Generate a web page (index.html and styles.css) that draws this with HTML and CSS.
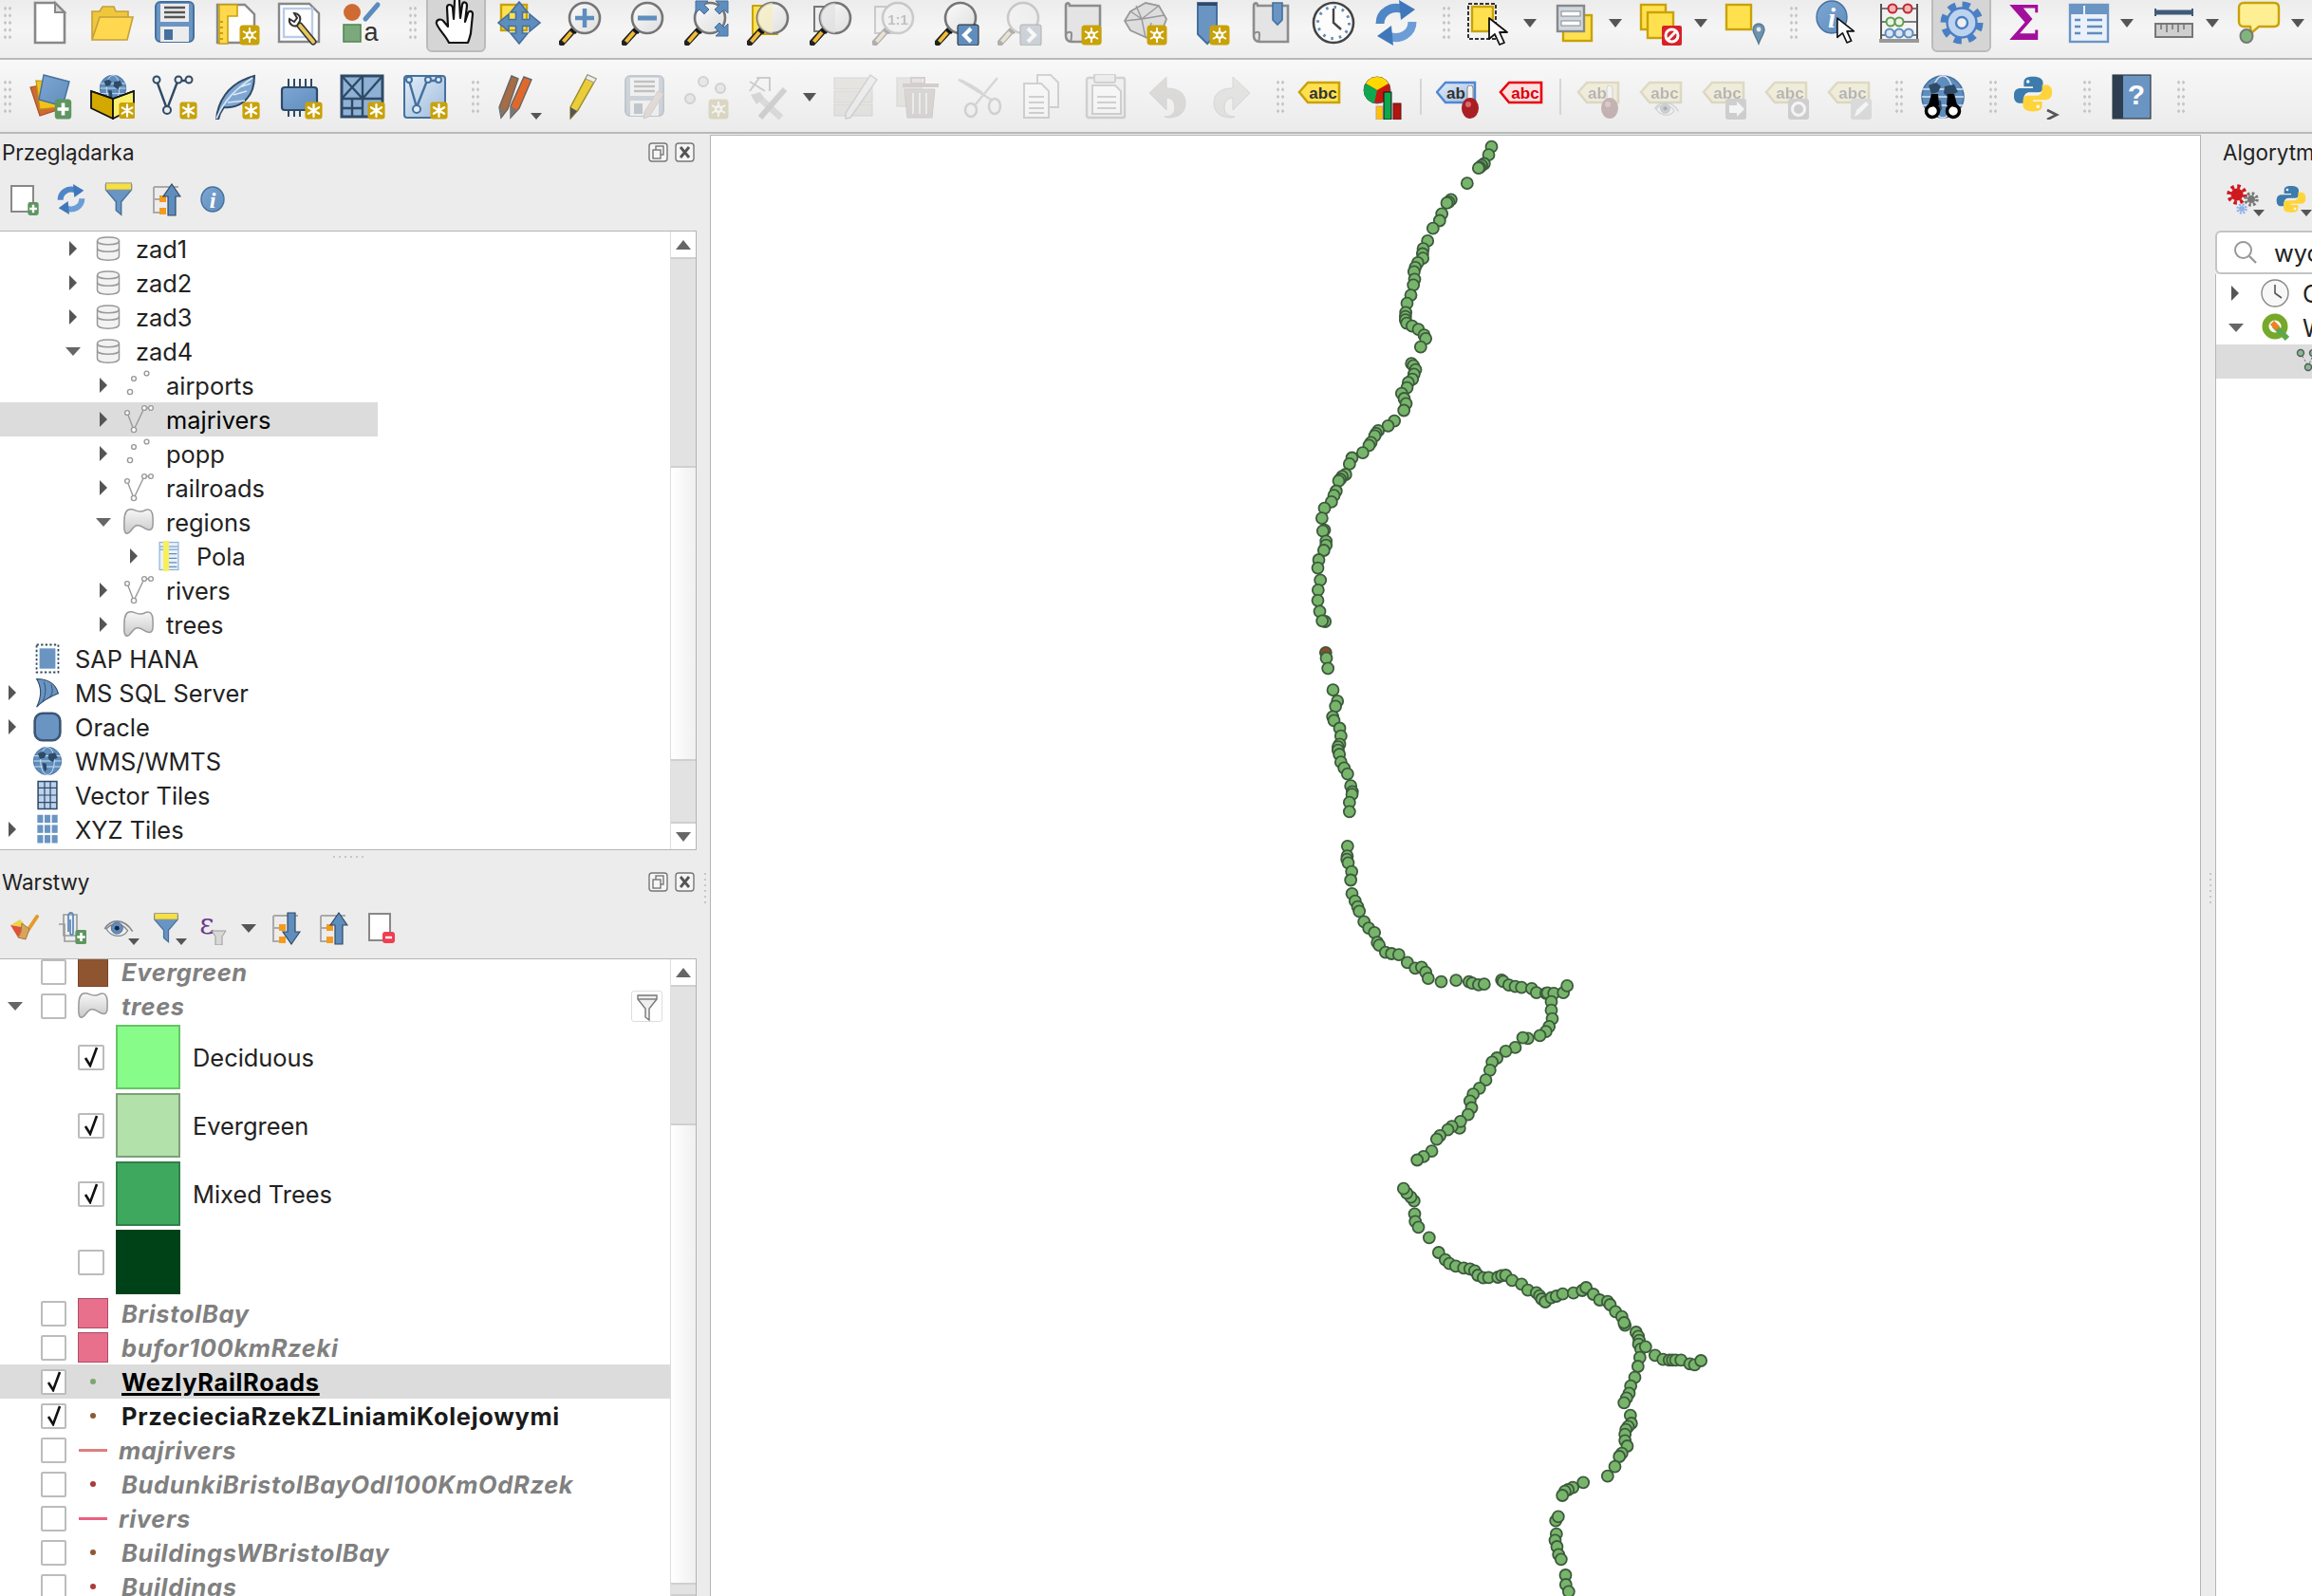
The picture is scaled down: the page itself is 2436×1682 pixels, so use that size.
FILE: index.html
```html
<!DOCTYPE html>
<html lang="pl">
<head>
  <meta charset="UTF-8" />
  <title>QGIS</title>
  <link rel="stylesheet" href="styles.css">
</head>
<body>

<!-- icon set -->
<svg class="defs" aria-hidden="true">
  <defs>
    <linearGradient id="blueFill" x1="0" y1="0" x2="1" y2="1"><stop offset="0" stop-color="#7ea6d2"/><stop offset="1" stop-color="#5f8dbd"/></linearGradient>
    <linearGradient id="paleBlue" x1="0" y1="0" x2="1" y2="1"><stop offset="0" stop-color="#e3edf8"/><stop offset="1" stop-color="#9dbbdc"/></linearGradient>
    <linearGradient id="glass" x1="0" y1="0" x2="1" y2="1"><stop offset="0" stop-color="#fbfbfb"/><stop offset="1" stop-color="#dedede"/></linearGradient>
    <linearGradient id="polyFill" x1="0" y1="0" x2="0" y2="1"><stop offset="0" stop-color="#f7f7f7"/><stop offset="1" stop-color="#c9c9c9"/></linearGradient>
  </defs>

  <symbol id="badge" viewBox="0 0 22 22"><rect x=".5" y=".5" width="21" height="21" rx="3.5" fill="#c9a208"/><path d="M11 3.5v15M4.5 7.2l13 7.6M4.5 14.8l13-7.6" stroke="#fff" stroke-width="2.6" stroke-linecap="round"/></symbol>
  <symbol id="badge2" viewBox="0 0 22 22"><rect x=".5" y=".5" width="21" height="21" rx="3.5" fill="#c9a208"/><path d="M11 3v16M4 7l14 8M4 15l14-8" stroke="#fff" stroke-width="1.8"/><circle cx="11" cy="11" r="4" fill="#fff"/><circle cx="11" cy="11" r="1.8" fill="#c9a208"/></symbol>
  <symbol id="plus" viewBox="0 0 20 24"><rect x=".5" y=".5" width="19" height="23" rx="4" fill="#5f9560"/><path d="M10 5v14M3.5 12h13" stroke="#fff" stroke-width="4"/></symbol>

  <symbol id="mag" viewBox="0 0 48 48"><path d="M14 33L3 45" stroke="#222" stroke-width="7" stroke-linecap="round"/><path d="M13 34L4.500 44" stroke="#f0bd36" stroke-width="4"/><path d="M17 26l5 5-5 5-5-5z" fill="#111"/><circle cx="27" cy="19" r="16" fill="url(#glass)" stroke="#757575" stroke-width="2.600"/></symbol>
  <symbol id="cursor" viewBox="0 0 26 30"><path d="M2 1v22l6-5 5 11 5-2-5-11h8z" fill="#fff" stroke="#111" stroke-width="1.800" stroke-linejoin="round"/></symbol>
  <symbol id="scroll" viewBox="0 0 48 48"><path d="M10 6h32v38H12c-4 0-6-3-6-6V6c0-3 4-4 4 0z" fill="#e4e4e4" stroke="#8d8d8d" stroke-width="2.600"/><path d="M6 36c2-3 6-3 6 0s-1 8 0 8" fill="none" stroke="#8d8d8d" stroke-width="2"/></symbol>
  <symbol id="floppy" viewBox="0 0 48 48"><rect x="4" y="2" width="40" height="42" rx="5" fill="#6a95c3" stroke="#44709e" stroke-width="2"/><rect x="9" y="4" width="30" height="19" fill="#ececec"/><path d="M13 8h22M13 13h22M13 18h22" stroke="#555" stroke-width="2.400"/><rect x="9" y="28" width="30" height="16" fill="#ececec"/><rect x="13" y="31" width="9" height="11" fill="#44709e"/></symbol>
  <symbol id="arrows" viewBox="0 0 48 48"><path d="M24 2l9 11h-5.500v7.500H35V15l11 9-11 9v-5.500h-7.500V35H33l-9 11-9-11h5.500v-7.500H13V33L2 24l11-9v5.500h7.500V13H15z" fill="#5f8dbd" stroke="#44709e" stroke-width="1.600"/></symbol>
  <symbol id="refresh" viewBox="0 0 48 48"><path d="M7 25C7 13 19 5 32 10" fill="none" stroke="#4f86c6" stroke-width="9"/><path d="M27 0l17 10-15 11z" fill="#3f78ba"/><path d="M41 23c0 12-12 20-25 15" fill="none" stroke="#6c9dd6" stroke-width="9"/><path d="M21 48L4 38l15-11z" fill="#3f78ba"/></symbol>
  <symbol id="gear" viewBox="0 0 48 48"><circle cx="24" cy="24" r="19" fill="none" stroke="currentColor" stroke-width="7" stroke-dasharray="8 6.920"/><circle cx="24" cy="24" r="15.500" fill="#bcd2ee" stroke="currentColor" stroke-width="2.400"/><circle cx="24" cy="24" r="6" fill="#efefef" stroke="currentColor" stroke-width="2.400"/></symbol>
  <symbol id="python" viewBox="0 0 48 48"><path d="M24 3c-9 0-11 3-11 7v5h11v2H9c-5 0-8 3-8 9s3 9 7 9h5v-6c0-4 3-7 7-7h10c4 0 6-2 6-6v-6c0-4-4-7-12-7z" fill="#3d7bad"/><circle cx="18" cy="9" r="2" fill="#fff"/><path d="M24 45c9 0 11-3 11-7v-5H24v-2h15c5 0 8-3 8-9s-3-9-7-9h-5v6c0 4-3 7-7 7H18c-4 0-6 2-6 6v6c0 4 4 7 12 7z" fill="#ffd43b"/><circle cx="30" cy="39" r="2" fill="#fff"/></symbol>
  <symbol id="funnel" viewBox="0 0 32 40"><path d="M1 3h30v6L19 23v15l-6-5V23L1 9z" fill="#6a95c3" stroke="#44709e" stroke-width="1.600"/><rect x="1" y="1" width="30" height="8" fill="#f5e046" stroke="#8c8c8c"/></symbol>
  <symbol id="line" viewBox="3 0 32 32"><path d="M7 9l7 18 11-23 7 0" fill="none" stroke="#999" stroke-width="1.400"/><circle cx="7" cy="9" r="2.400" fill="#fff" stroke="#999" stroke-width="1.400"/><circle cx="14" cy="27" r="2.600" fill="#fff" stroke="#999" stroke-width="1.400"/><circle cx="25" cy="4" r="2.400" fill="#fff" stroke="#999" stroke-width="1.400"/><circle cx="32" cy="4" r="2.400" fill="#fff" stroke="#999" stroke-width="1.400"/></symbol>
  <symbol id="points" viewBox="3 0 32 32"><circle cx="10" cy="23" r="2.600" fill="#fff" stroke="#999" stroke-width="1.400"/><circle cx="14" cy="9" r="2.400" fill="#fff" stroke="#999" stroke-width="1.400"/><circle cx="27.500" cy="3.500" r="2.400" fill="#fff" stroke="#999" stroke-width="1.400"/></symbol>
  <symbol id="poly" viewBox="0 0 34 34"><path d="M8 3c6 0 10 5 16 1 6-3 9 2 9 8 0 7 1 14-4 14-6 0-8-6-14-5-5 1-7 9-11 9-4 0-3-9-3-14 0-7 1-13 7-13z" fill="url(#polyFill)" stroke="#999" stroke-width="1.600"/></symbol>
  <symbol id="db" viewBox="-3 -3 32 32"><path d="M1.500 5c0-5.500 23-5.500 23 0v16c0 5.500-23 5.500-23 0z" fill="#f2f2f2" stroke="#999" stroke-width="1.500"/><path d="M1.500 5c0 5 23 5 23 0M1.500 12.500c0 5 23 5 23 0" fill="none" stroke="#999" stroke-width="1.500"/></symbol>
  <symbol id="globe" viewBox="0 0 48 48"><circle cx="24" cy="24" r="22" fill="#5f8dbd" stroke="#44709e" stroke-width="1.500"/><ellipse cx="24" cy="24" rx="11" ry="22" fill="none" stroke="#d7e5f3" stroke-width="1.400"/><path d="M3 16h42M2 24h44M3 33h42" stroke="#d7e5f3" stroke-width="1.400"/><path d="M9 12l8-3 5 4-3 6-7 2zM26 13l10-2 4 8-5 2-2 5-4-2-4-4zM16 27l6 1 1 9-3 4-3-7z" fill="#2f4a66"/></symbol>
  <symbol id="eye" viewBox="0 0 36 30"><path d="M1 15C8 3 24 1 35 18" fill="none" stroke="#888" stroke-width="2"/><path d="M3 15c6-7 18-9 26 2-6 10-20 8-26-2z" fill="#eee" stroke="#888" stroke-width="1.500"/><circle cx="16" cy="14" r="7" fill="#5f8dbd" stroke="#44709e"/><circle cx="16" cy="14" r="2.800" fill="#223"/></symbol>

  <!-- tags for the label tools -->
  <symbol id="tag" viewBox="0 0 48 48"><path d="M3 19l9-10h33v21H12z" fill="#ffe14f" stroke="#c9a208" stroke-width="2.600"/></symbol>
  <symbol id="redball" viewBox="0 0 20 36"><rect x="7" y="0" width="6" height="18" rx="3" fill="#f3f3f3" stroke="#888"/><ellipse cx="10" cy="24" rx="9" ry="11" fill="#a81f24"/><ellipse cx="8" cy="20" rx="3" ry="3" fill="#d96b6e"/></symbol>

  <!-- first toolbar -->
  <symbol id="i-new" viewBox="0 0 48 48"><path d="M9 3h21l10 10v32H9z" fill="#fff" stroke="#888" stroke-width="2.600"/><path d="M30 3v10h10z" fill="#d8d8d8" stroke="#888" stroke-width="2"/></symbol>
  <symbol id="i-open" viewBox="0 0 48 48"><path d="M3 41V12h8l3-5h12l2 5h13v8" fill="#f0c63c" stroke="#c4a03a" stroke-width="1.600"/><path d="M11 18h35l-6 24H3z" fill="#ffd84f" stroke="#c4a03a" stroke-width="1.600"/></symbol>
  <symbol id="i-layout" viewBox="0 0 48 48"><path d="M3 5h29l10 10v30H3z" fill="#fff" stroke="#888" stroke-width="2.400"/><path d="M5 5h19v12H14v29H5z" fill="#ffd84f" stroke="#c9a208" stroke-width="1.600"/><path d="M5 23h4M5 29h4M5 35h4M5 41h4" stroke="#c9a208" stroke-width="2"/><use href="#badge2" x="26" y="26" width="22" height="22"/></symbol>
  <symbol id="i-layouts" viewBox="0 0 48 48"><path d="M2 4h32l10 10v30H2z" fill="#fff" stroke="#888" stroke-width="2.400"/><rect x="7" y="9" width="30" height="30" fill="#fff" stroke="#b8cdea" stroke-width="2.400"/><path d="M24 27l14 17" stroke="#333" stroke-width="7" stroke-linecap="round"/><path d="M24 27l14 17" stroke="#e6c75a" stroke-width="4" stroke-linecap="round"/><path d="M13 20a6 6 0 0 0 8 7l3-5a6 6 0 0 0-6-8l3 5-3 4z" fill="#fff" stroke="#333" stroke-width="2"/></symbol>
  <symbol id="i-style" viewBox="0 0 48 48"><circle cx="13" cy="13" r="9" fill="#cf6a33"/><path d="M40 5L27 20" stroke="#5b8cbf" stroke-width="5" stroke-linecap="round"/><rect x="4" y="26" width="18" height="18" fill="#7ba97c" stroke="#55875a" stroke-width="1.600"/></symbol>
  <symbol id="i-hand" viewBox="0 0 48 48"><path d="M16 45C13 38 5 31 3 25c-1-4 4-6 7-3l5 6-1-20c0-4 5-4 6 0l1 12 1-19c0-4 5-4 5 0l1 18 2-14c1-4 5-3 5 1l-2 17 3-9c1-3 5-3 5 1l-2 20c-1 5-2 7-3 10z" fill="#fff" stroke="#111" stroke-width="2.200" stroke-linejoin="round"/></symbol>
  <symbol id="i-move" viewBox="0 0 48 48"><rect x="5" y="5" width="27" height="27" fill="#ffe14f" stroke="#c9a208" stroke-width="2.400"/><use href="#arrows"/></symbol>
  <symbol id="i-zin" viewBox="0 0 48 48"><use href="#mag"/><path d="M27 9v20M17 19h20" stroke="#5f8dbd" stroke-width="4.500"/></symbol>
  <symbol id="i-zout" viewBox="0 0 48 48"><use href="#mag"/><path d="M17 19h20" stroke="#5f8dbd" stroke-width="5"/></symbol>
  <symbol id="i-zfull" viewBox="0 0 48 48"><use href="#mag"/><path d="M12 1h13l-4 4 5 5-5 5-5-5-4 4zM46 1v13l-4-4-5 5-5-5 5-5-4-4zM46 38V25l-4 4-5-5-5 5 5 5-4 4z" fill="#5f8dbd" stroke="#44709e"/></symbol>
  <symbol id="i-zlayer" viewBox="0 0 48 48"><rect x="6" y="6" width="26" height="30" fill="#ffe14f" stroke="#c9a208" stroke-width="2"/><use href="#mag"/><path d="M27 3a16 16 0 0 0 0 32V3z" fill="#f5ecbe" opacity=".7"/></symbol>
  <symbol id="i-zsel" viewBox="0 0 48 48"><rect x="5" y="7" width="25" height="26" fill="#eee" stroke="#777" stroke-width="2"/><use href="#mag"/><path d="M27 3a16 16 0 0 0 0 32V3z" fill="#ddd" opacity=".6"/></symbol>
  <symbol id="i-z11" viewBox="0 0 48 48"><rect x="3" y="7" width="26" height="28" fill="#eee" stroke="#777" stroke-width="2"/><use href="#mag"/></symbol>
  <symbol id="i-zlast" viewBox="0 0 48 48"><use href="#mag"/><rect x="24" y="26" width="22" height="22" rx="2" fill="#5f8dbd" stroke="#222"/><path d="M38 30l-7 7 7 7" fill="none" stroke="#fff" stroke-width="4"/></symbol>
  <symbol id="i-znext" viewBox="0 0 48 48"><use href="#mag"/><rect x="24" y="26" width="22" height="22" rx="2" fill="#5f8dbd" stroke="#222"/><path d="M32 30l7 7-7 7" fill="none" stroke="#fff" stroke-width="4"/></symbol>
  <symbol id="i-map" viewBox="0 0 48 48"><use href="#scroll"/><use href="#badge2" x="22" y="26" width="22" height="22"/></symbol>
  <symbol id="i-map3d" viewBox="0 0 48 48"><path d="M8 12L24 3l14 3 8 14-6 16-14 4-18-8-6-10z" fill="#ddd" stroke="#999" stroke-width="1.800"/><path d="M8 12l12 8 18-14M20 20l4 20M20 20L2 22M20 20l24-4M14 6l6 14M30 24l-4 16" fill="none" stroke="#999" stroke-width="1.400"/><use href="#badge2" x="25" y="26" width="22" height="22"/></symbol>
  <symbol id="i-mark" viewBox="0 0 48 48"><path d="M13 3h20v33l-10 10-10-10z" fill="#6a95c3" stroke="#44709e" stroke-width="2"/><rect x="13" y="3" width="20" height="3" fill="#2f4a66"/><use href="#badge2" x="25" y="26" width="22" height="22"/></symbol>
  <symbol id="i-marks" viewBox="0 0 48 48"><use href="#scroll"/><path d="M26 3h10v18l-5 5-5-5z" fill="#6a95c3" stroke="#44709e" stroke-width="1.600"/></symbol>
  <symbol id="i-clock" viewBox="0 0 48 48"><circle cx="24" cy="24" r="21" fill="#fdfdfd" stroke="#444" stroke-width="2.600"/><circle cx="24" cy="24" r="16.500" fill="none" stroke="#5f8dbd" stroke-width="3" stroke-dasharray="2.600 6.040"/><path d="M24 9v15l8 7" fill="none" stroke="#444" stroke-width="2.400"/></symbol>
  <symbol id="i-select" viewBox="0 0 48 48"><rect x="5" y="7" width="22" height="26" fill="#ffe14f" stroke="#c9a208" stroke-width="2.400"/><rect x="1" y="4" width="29" height="37" fill="none" stroke="#333" stroke-width="2" stroke-dasharray="4 2"/><use href="#cursor" x="21" y="18" width="26" height="30"/></symbol>
  <symbol id="i-sellist" viewBox="0 0 48 48"><rect x="11" y="16" width="30" height="27" fill="#ffe14f" stroke="#c9a208" stroke-width="2.400"/><rect x="5" y="6" width="28" height="27" fill="#cfd8e0" stroke="#888" stroke-width="2.400"/><rect x="9" y="12" width="20" height="5" fill="#fff" stroke="#888"/><rect x="9" y="22" width="20" height="5" fill="#fff" stroke="#888"/></symbol>
  <symbol id="i-desel" viewBox="0 0 48 48"><rect x="3" y="5" width="26" height="26" fill="#ffe14f" stroke="#c9a208" stroke-width="2.400"/><rect x="10" y="13" width="27" height="27" fill="#ffe14f" stroke="#c9a208" stroke-width="2.400"/><rect x="25" y="27" width="21" height="21" rx="2" fill="#d9202a"/><circle cx="35.500" cy="37.500" r="6.500" fill="none" stroke="#fff" stroke-width="3"/><path d="M31 42l9-9" stroke="#fff" stroke-width="3"/></symbol>
  <symbol id="i-selloc" viewBox="0 0 48 48"><rect x="3" y="5" width="26" height="26" fill="#ffe14f" stroke="#c9a208" stroke-width="2.400"/><path d="M37 46c-3-8-6-11-6-15a6 6 0 0 1 12 0c0 4-3 7-6 15z" fill="#6f92ad" stroke="#577a94" stroke-width="1.400"/><circle cx="37" cy="31" r="2.400" fill="#dfe9f2"/></symbol>
  <symbol id="i-abacus" viewBox="0 0 48 48"><path d="M5 4v38M43 4v38" stroke="#555" stroke-width="2"/><path d="M5 9h38M5 23h38M5 37h38" stroke="#555" stroke-width="1.600"/><g fill="#ecf3e4" stroke-width="2"><circle cx="17" cy="9" r="4.500" stroke="#c0272d" fill="#f3b7b7"/><circle cx="33" cy="9" r="4.500" stroke="#c0272d" fill="#f3b7b7"/><circle cx="15" cy="23" r="4.500" stroke="#5f9c4f"/><circle cx="24" cy="23" r="4.500" stroke="#5f9c4f"/><circle cx="14" cy="35" r="4.500" stroke="#5f8dbd" fill="#dbe7f3"/><circle cx="24" cy="35" r="4.500" stroke="#5f8dbd" fill="#dbe7f3"/><circle cx="34" cy="35" r="4.500" stroke="#5f8dbd" fill="#dbe7f3"/></g><rect x="3" y="41" width="42" height="4" fill="#999"/></symbol>
  <symbol id="i-table" viewBox="0 0 48 48"><rect x="6" y="5" width="40" height="39" fill="#eaf1fa" stroke="#6a95c3" stroke-width="2.400"/><rect x="7" y="6" width="38" height="9" fill="#6a95c3"/><path d="M21 6v9" stroke="#eaf1fa" stroke-width="2"/><path d="M11 21h6M24 21h16M11 28h6M24 28h16M11 35h6M24 35h16" stroke="#5f8dbd" stroke-width="2.600"/></symbol>
  <symbol id="i-measure" viewBox="0 0 48 48"><path d="M6 9v8M45 9v8" stroke="#3f5a7a" stroke-width="2"/><path d="M6 13h39" stroke="#3f5a7a" stroke-width="5"/><rect x="6" y="25" width="39" height="14" fill="#cfcfcf" stroke="#777" stroke-width="2"/><path d="M12 25v6M18 25v9M24 25v6M30 25v9M36 25v6" stroke="#777" stroke-width="1.600"/></symbol>
  <symbol id="i-annot" viewBox="0 0 48 48"><path d="M9 3h32c3 0 5 2 5 5v15c0 3-2 5-5 5H25l-8 7-1-7H9c-3 0-5-2-5-5V8c0-3 2-5 5-5z" fill="#ffef94" stroke="#c9a208" stroke-width="2.400"/><ellipse cx="12" cy="38" rx="6.500" ry="7" fill="#80b67d" stroke="#777" stroke-width="2"/></symbol>

  <!-- second toolbar -->
  <symbol id="i-dsm" viewBox="0 0 48 48"><path d="M4 14l24-5 7 28-21 7z" fill="#cf6a33" stroke="#a94f22" stroke-width="1.200"/><path d="M10 7l22 1 2 27-20 2z" fill="#f2c21a" stroke="#b9950f" stroke-width="1.200"/><path d="M18 1l27 7-7 26-25-7z" fill="url(#blueFill)" stroke="#44709e" stroke-width="1.400"/><use href="#plus" x="29" y="26" width="19" height="22"/></symbol>
  <symbol id="i-gpkg" viewBox="0 0 48 48"><use href="#globe" x="10" y="0" width="30" height="30"/><path d="M2 18l23 8v21L2 36z" fill="#d3a900" stroke="#111" stroke-width="1.800"/><path d="M25 26l22-8v18L25 47z" fill="#f9ef6e" stroke="#111" stroke-width="1.800"/><path d="M2 18L25 26 47 18" fill="none" stroke="#111" stroke-width="1.800"/><use href="#badge" x="31" y="29" width="18" height="19"/></symbol>
  <symbol id="i-vline" viewBox="0 0 48 48"><path d="M5 7l11 30L27 8M27 7h10" fill="none" stroke="#2f4a66" stroke-width="2.400"/><circle cx="5" cy="6" r="3.500" fill="#eee" stroke="#2f4a66" stroke-width="2"/><circle cx="16" cy="38" r="4" fill="#eee" stroke="#2f4a66" stroke-width="2"/><circle cx="28" cy="6" r="3.500" fill="#eee" stroke="#2f4a66" stroke-width="2"/><circle cx="39" cy="6" r="3.500" fill="#eee" stroke="#2f4a66" stroke-width="2"/><use href="#badge" x="29" y="29" width="19" height="19"/></symbol>
  <symbol id="i-feather" viewBox="0 0 48 48"><path d="M2 48C3 32 12 10 42 2c0 8-2 18-8 24-6 7-14 10-24 9-3 4-5 8-6 13z" fill="#7ea6d2" stroke="#2f4a66" stroke-width="2"/><path d="M2 47C10 28 22 16 40 4M14 30l18-2M20 22l14-4M26 14l12-4" fill="none" stroke="#dbe7f3" stroke-width="1.600"/><use href="#badge" x="29" y="29" width="19" height="19"/></symbol>
  <symbol id="i-chip" viewBox="0 0 48 48"><path d="M12 5v9M18 5v9M24 5v9M30 5v9M36 5v9M12 36v9M18 36v9M24 36v9" stroke="#2f4a66" stroke-width="2"/><rect x="5" y="14" width="37" height="24" rx="3" fill="url(#blueFill)" stroke="#2f4a66" stroke-width="2.200"/><use href="#badge" x="29" y="29" width="19" height="19"/></symbol>
  <symbol id="i-mesh" viewBox="0 0 48 48"><rect x="2" y="2" width="43" height="43" fill="#8fb1d6" stroke="#2f4a66" stroke-width="3"/><path d="M2 26h43M24 2v43M2 2l22 24M24 2L2 26M24 26L45 2M2 36h22M13 26v19" stroke="#2f4a66" stroke-width="2.400" fill="none"/><use href="#badge" x="29" y="29" width="19" height="19"/></symbol>
  <symbol id="i-virt" viewBox="0 0 48 48"><rect x="2" y="2" width="43" height="44" rx="3" fill="url(#paleBlue)" stroke="#44709e" stroke-width="2"/><path d="M7 7l8 28 11-28 11 0" fill="none" stroke="#44709e" stroke-width="2.400"/><circle cx="7" cy="6" r="3" fill="#e3edf8" stroke="#44709e" stroke-width="2"/><circle cx="15" cy="37" r="4" fill="#e3edf8" stroke="#44709e" stroke-width="2"/><circle cx="27" cy="6" r="3" fill="#e3edf8" stroke="#44709e" stroke-width="2"/><circle cx="38" cy="6" r="3" fill="#e3edf8" stroke="#44709e" stroke-width="2"/><use href="#badge" x="29" y="29" width="19" height="19"/></symbol>
  <symbol id="i-pencils" viewBox="0 0 48 48"><path d="M16 2l7 3-11 32-7 9-2-11z" fill="#a56c45" stroke="#666" stroke-width="1.400"/><path d="M29 3l8 3-13 30-9 10 0-12z" fill="#e0692a" stroke="#666" stroke-width="1.400"/><path d="M5 46l-2-11 5 2z M15 46v-12l6 3z" fill="#777"/></symbol>
  <symbol id="i-pencil" viewBox="0 0 48 48"><path d="M30 1l9 4-19 33-8 9 0-12z" fill="#e9ce3a" stroke="#9b8a30" stroke-width="1.400"/><path d="M30 1l9 4-2 4-9-4z" fill="#eee" stroke="#999"/><path d="M12 47v-12l7 4z" fill="#555"/></symbol>
  <symbol id="i-saveedits" viewBox="0 0 48 48"><use href="#floppy"/><path d="M38 18l6 3-15 24-6 2 1-7z" fill="#e3a08d" stroke="#888"/></symbol>
  <symbol id="i-ptnew" viewBox="0 0 48 48"><circle cx="20" cy="8" r="5" fill="#ccc" stroke="#888" stroke-width="2"/><circle cx="38" cy="15" r="5" fill="#ccc" stroke="#888" stroke-width="2"/><circle cx="6" cy="26" r="5" fill="#ccc" stroke="#888" stroke-width="2"/><use href="#badge2" x="25" y="26" width="22" height="22"/></symbol>
  <symbol id="i-tools" viewBox="0 0 48 48"><path d="M10 4h14v14M3 8l16 10M13 4L3 18" fill="none" stroke="#777" stroke-width="2"/><path d="M10 22l26 24" stroke="#aaa" stroke-width="7"/><path d="M40 16L14 46" stroke="#888" stroke-width="6"/><path d="M4 22l10-3 4 6-8 7z" fill="#999"/></symbol>
  <symbol id="i-edit" viewBox="0 0 48 48"><rect x="2" y="4" width="40" height="12" fill="#c9c4a8" stroke="#999"/><rect x="2" y="18" width="40" height="12" fill="#c9c4a8" stroke="#999"/><rect x="2" y="32" width="40" height="12" fill="#c9c4a8" stroke="#999"/><path d="M40 1l7 5-28 40-5 1 0-6z" fill="#ddd" stroke="#888" stroke-width="1.400"/></symbol>
  <symbol id="i-trash" viewBox="0 0 48 48"><rect x="2" y="4" width="26" height="30" fill="#c9c4a8" stroke="#999"/><path d="M8 12h38" stroke="#a77" stroke-width="4"/><path d="M17 4h14v6H17z" fill="none" stroke="#a77" stroke-width="2"/><path d="M10 16h32l-3 30H13z" fill="#a98" stroke="#977"/><path d="M19 20v22M26 20v22M33 20v22" stroke="#ddd" stroke-width="2"/></symbol>
  <symbol id="i-scissors" viewBox="0 0 48 48"><path d="M1 6l36 22M1 6c8 2 20 10 25 14" stroke="#999" stroke-width="2.400" fill="none"/><ellipse cx="39" cy="34" rx="6" ry="8" fill="none" stroke="#a88" stroke-width="2.600"/><ellipse cx="14" cy="38" rx="6" ry="7" fill="none" stroke="#a88" stroke-width="2.600"/><path d="M18 33L42 4" stroke="#999" stroke-width="2.400"/></symbol>
  <symbol id="i-copy" viewBox="0 0 48 48"><path d="M18 1h14l8 8v26H18z" fill="#f7f7f7" stroke="#888" stroke-width="2"/><path d="M4 10h18l8 8v28H4z" fill="#fff" stroke="#888" stroke-width="2"/><path d="M9 24h16M9 30h16M9 36h16M9 41h16" stroke="#888" stroke-width="2"/></symbol>
  <symbol id="i-paste" viewBox="0 0 48 48"><rect x="4" y="4" width="40" height="42" rx="2" fill="#e8e8e8" stroke="#888" stroke-width="2.400"/><rect x="12" y="0" width="22" height="9" rx="2" fill="#d8d8d8" stroke="#888" stroke-width="2"/><path d="M10 12h24l6 6v24H10z" fill="#fff" stroke="#888" stroke-width="2"/><path d="M15 24h20M15 30h20M15 36h20" stroke="#888" stroke-width="2"/></symbol>
  <symbol id="i-undo" viewBox="0 0 48 48"><path d="M22 3v12c14 0 20 6 20 16 0 10-8 15-18 15l-4-1c8 0 11-4 11-10s-4-10-9-10v13L4 20z" fill="#b5a69a" stroke="#999"/></symbol>
  <symbol id="i-redo" viewBox="0 0 48 48"><path d="M26 3v12c-14 0-20 6-20 16 0 10 8 15 18 15l4-1c-8 0-11-4-11-10s4-10 9-10v13l18-18z" fill="#bfc5ba" stroke="#999"/></symbol>
  <symbol id="i-diagram" viewBox="0 0 48 48"><circle cx="19" cy="17" r="14" fill="#c9160f" stroke="#555"/><path d="M19 17V3a14 14 0 0 0-12 7z" fill="#ffd800"/><path d="M19 3a14 14 0 0 1 12 7l-12 7z" fill="#ffd800"/><path d="M19 17L7 10a14 14 0 0 0 9 21z" fill="#0fa650"/><rect x="18" y="34" width="7" height="14" fill="#ffc400" stroke="#c99"/><rect x="26" y="19" width="8" height="29" fill="#0fa650" stroke="#111"/><rect x="36" y="31" width="8" height="17" fill="#b1160f" stroke="#611"/></symbol>
  <symbol id="i-abcmove" viewBox="0 0 48 48"><rect x="26" y="26" width="22" height="22" rx="3" fill="#888"/><path d="M30 33h8v-4l8 8-8 8v-4h-8z" fill="#fff"/></symbol>
  <symbol id="i-abcrot" viewBox="0 0 48 48"><rect x="26" y="26" width="22" height="22" rx="3" fill="#888"/><circle cx="37" cy="37" r="6.500" fill="none" stroke="#fff" stroke-width="3"/></symbol>
  <symbol id="i-abcedit" viewBox="0 0 48 48"><rect x="26" y="26" width="22" height="22" rx="3" fill="#aaa"/><path d="M30 45l2-7 10-9 3 3-10 10z" fill="#fff"/></symbol>
  <symbol id="i-locator" viewBox="0 0 48 48"><use href="#globe"/><circle cx="13" cy="39" r="6.500" fill="#fff" stroke="#000" stroke-width="3.500"/><circle cx="35" cy="39" r="6.500" fill="#fff" stroke="#000" stroke-width="3.500"/><path d="M8 36l4-15h7l1 12-6 1zM40 36l-4-15h-7l-1 12 6 1z" fill="#000"/></symbol>
  <symbol id="i-py" viewBox="0 0 48 48"><use href="#python" x="-1" y="0" width="42" height="42"/><path d="M35 38l10 5-10 5" fill="none" stroke="#555" stroke-width="2.600"/></symbol>
  <symbol id="i-help" viewBox="0 0 48 48"><rect x="5" y="1" width="40" height="46" fill="#6a95c3" stroke="#222"/><rect x="5" y="1" width="11" height="46" fill="#2c3e50"/></symbol>

  <!-- panel tools -->
  <symbol id="p-add" viewBox="0 0 32 36"><rect x="3" y="4" width="23" height="27" fill="#fff" stroke="#888" stroke-width="2"/><use href="#plus" x="20" y="20" width="12" height="16"/></symbol>
  <symbol id="p-collapse" viewBox="0 0 32 36"><path d="M3 5h26M3 5v28M3 18h8M3 32h8" stroke="#aaa" stroke-width="2" fill="none"/><rect x="9" y="14" width="7" height="7" fill="#f49b1c"/><rect x="9" y="27" width="7" height="7" fill="#f49b1c"/><path d="M22 2l9 13h-5v20h-8V15h-5z" fill="#5f8dbd" stroke="#2f4a66" stroke-width="1.200"/></symbol>
  <symbol id="p-expand" viewBox="0 0 32 36"><path d="M3 5h26M3 5v28M3 18h8M3 32h8" stroke="#aaa" stroke-width="2" fill="none"/><rect x="9" y="14" width="7" height="7" fill="#f49b1c"/><rect x="9" y="27" width="7" height="7" fill="#f49b1c"/><path d="M22 35l9-13h-5V2h-8v20h-5z" fill="#5f8dbd" stroke="#2f4a66" stroke-width="1.200"/></symbol>
  <symbol id="p-info" viewBox="0 0 32 36"><ellipse cx="15" cy="18" rx="12" ry="13" fill="url(#blueFill)" stroke="#44709e" stroke-width="1.400"/></symbol>
  <symbol id="p-brush" viewBox="0 0 32 36"><path d="M20 21L30 6" stroke="#e49b2c" stroke-width="4" stroke-linecap="round"/><path d="M2 15l10-6 4 4-2 4z" fill="#e9d64a"/><path d="M2 15l12 2 1 1-5 10z" fill="#e2503a"/><path d="M14 13l8 6-4 11-8-2 3-5z" fill="#d9a45a" stroke="#a47838"/></symbol>
  <symbol id="p-group" viewBox="0 0 32 36"><path d="M8 12V4h14v22H8z" fill="#eee" stroke="#999" stroke-width="1.600"/><path d="M3 14h6v18h16" fill="none" stroke="#999" stroke-width="1.600"/><path d="M13 22V5c0-4 5-4 5 0v18c0 3-3 3-3 0V9" fill="none" stroke="#5f8dbd" stroke-width="1.800"/><use href="#plus" x="20" y="19" width="13" height="17"/></symbol>
  <symbol id="p-eye" viewBox="0 0 32 36"><use href="#eye" x="0" y="6" width="32" height="26"/></symbol>
  <symbol id="p-funnel" viewBox="0 0 32 36"><use href="#funnel" x="3" y="0" width="26" height="36"/></symbol>
  <symbol id="p-remove" viewBox="0 0 32 36"><path d="M26 22V3H4v28h17" fill="#fff" stroke="#888" stroke-width="2"/><rect x="18" y="22" width="13" height="12" rx="3" fill="#ef3f52"/><path d="M21 28h7" stroke="#fff" stroke-width="2.400"/></symbol>
  <symbol id="d-float" viewBox="0 0 21 21"><rect x="1" y="1" width="19" height="19" rx="3" fill="#f5f5f5" stroke="#777" stroke-width="1.400"/><rect x="8" y="4" width="8" height="9" fill="none" stroke="#777" stroke-width="1.400"/><rect x="5" y="8" width="8" height="9" fill="#f5f5f5" stroke="#777" stroke-width="1.400"/></symbol>
  <symbol id="d-close" viewBox="0 0 21 21"><rect x="1" y="1" width="19" height="19" rx="3" fill="#f5f5f5" stroke="#777" stroke-width="1.400"/><path d="M6 5l9 11M15 5L6 16" stroke="#555" stroke-width="2.800"/></symbol>

  <!-- tree icons -->
  <symbol id="t-table" viewBox="0 0 30 42"><rect x="2" y="2" width="26" height="38" fill="#eaf1fa" stroke="#8fb1d6" stroke-width="1.600"/><path d="M2 8h26M2 12h26" stroke="#8fb1d6" stroke-width="2"/><path d="M15 18h11M15 24h11M15 30h11M15 36h11" stroke="#5f8dbd" stroke-width="1.600"/><rect x="7" y="0" width="8" height="42" fill="#f7f05a"/></symbol>
  <symbol id="t-hana" viewBox="0 0 34 42"><rect x="2" y="2" width="30" height="38" fill="none" stroke="#2f4a66" stroke-width="2.400" stroke-dasharray="3 3"/><rect x="6" y="7" width="22" height="28" fill="#6a95c3"/></symbol>
  <symbol id="t-mssql" viewBox="0 0 34 42"><path d="M2 2c14 0 26 6 30 20-10 4-22 10-30 19 6-12 8-26 0-39z" fill="#6a95c3" stroke="#2f4a66" stroke-width="1.400"/><path d="M12 6c4 10 2 20-2 28M22 10c3 8 2 12-2 18" fill="none" stroke="#2f4a66" stroke-width="1.200"/></symbol>
  <symbol id="t-oracle" viewBox="0 0 34 36"><rect x="2" y="2" width="30" height="32" rx="9" fill="#6a95c3" stroke="#3c5675" stroke-width="3"/></symbol>
  <symbol id="t-grid" viewBox="0 0 30 42"><rect x="2" y="2" width="26" height="38" fill="#bcd2ee" stroke="#2f4a66" stroke-width="2"/><path d="M11 2v38M19 2v38M2 11h26M2 21h26M2 31h26" stroke="#2f4a66" stroke-width="1.600"/></symbol>
  <symbol id="t-xyz" viewBox="0 0 30 42"><g fill="#6a95c3"><rect x="1" y="1" width="8" height="11"/><rect x="11" y="1" width="8" height="11"/><rect x="21" y="1" width="8" height="11"/><rect x="1" y="15" width="8" height="11"/><rect x="11" y="15" width="8" height="11"/><rect x="21" y="15" width="8" height="11"/><rect x="1" y="29" width="8" height="11"/><rect x="11" y="29" width="8" height="11"/><rect x="21" y="29" width="8" height="11"/></g></symbol>
  <symbol id="t-funnel" viewBox="0 0 24 30"><path d="M2 3h20v4l-8 10v12l-4-3v-9L2 7z" fill="#eee" stroke="#777" stroke-width="1.400"/><path d="M2 7h20" stroke="#777" stroke-width="1.400"/></symbol>
  <symbol id="c-check" viewBox="0 0 16 22"><path d="M2 12l5 8L14 1" fill="none" stroke="#111" stroke-width="2.600"/></symbol>
  <symbol id="r-proc" viewBox="0 0 36 32"><circle cx="11" cy="11" r="6.500" fill="#d0181f"/><circle cx="11" cy="11" r="8.500" fill="none" stroke="#d0181f" stroke-width="4.500" stroke-dasharray="3.400 3.270"/><circle cx="26" cy="16" r="4" fill="#777"/><circle cx="26" cy="16" r="6" fill="none" stroke="#777" stroke-width="3.500" stroke-dasharray="2.500 2.200"/><circle cx="16" cy="26" r="3" fill="#8fb1e6"/><circle cx="16" cy="26" r="4.500" fill="none" stroke="#8fb1e6" stroke-width="2.500" stroke-dasharray="2 1.530"/></symbol>
  <symbol id="r-clock" viewBox="0 0 30 30"><circle cx="15" cy="15" r="14" fill="#f7f7f7" stroke="#888" stroke-width="1.400"/><path d="M15 6v9l7 5" fill="none" stroke="#555" stroke-width="1.600"/></symbol>
  <symbol id="r-qgis" viewBox="0 0 30 30"><circle cx="15" cy="14" r="10" fill="none" stroke="#76a82a" stroke-width="7"/><path d="M14 13l14 14" stroke="#5fa84a" stroke-width="6"/><path d="M12 10l6 6" stroke="#f08020" stroke-width="6"/></symbol>
</svg>

<div class="toolbar tb-top">
  <span class="grip grip-first"></span>
  <button class="tb"><svg class="ic"><use href="#i-new"/></svg></button>
  <button class="tb"><svg class="ic"><use href="#i-open"/></svg></button>
  <button class="tb"><svg class="ic"><use href="#floppy"/></svg></button>
  <button class="tb"><svg class="ic"><use href="#i-layout"/></svg></button>
  <button class="tb"><svg class="ic"><use href="#i-layouts"/></svg></button>
  <button class="tb"><svg class="ic" viewBox="0 0 48 48"><use href="#i-style"/><text x="33" y="43" text-anchor="middle" class="svg-a" fill="#333">a</text></svg></button>
  <span class="grip"></span>
  <button class="tb on"><svg class="ic"><use href="#i-hand"/></svg></button>
  <button class="tb"><svg class="ic"><use href="#i-move"/></svg></button>
  <button class="tb"><svg class="ic"><use href="#i-zin"/></svg></button>
  <button class="tb"><svg class="ic"><use href="#i-zout"/></svg></button>
  <button class="tb"><svg class="ic"><use href="#i-zfull"/></svg></button>
  <button class="tb"><svg class="ic"><use href="#i-zlayer"/></svg></button>
  <button class="tb"><svg class="ic"><use href="#i-zsel"/></svg></button>
  <button class="tb off"><svg class="ic" viewBox="0 0 48 48"><use href="#i-z11"/><text x="27" y="26" text-anchor="middle" class="svg-s" fill="#555">1:1</text></svg></button>
  <button class="tb"><svg class="ic"><use href="#i-zlast"/></svg></button>
  <button class="tb off"><svg class="ic"><use href="#i-znext"/></svg></button>
  <button class="tb"><svg class="ic"><use href="#i-map"/></svg></button>
  <button class="tb"><svg class="ic"><use href="#i-map3d"/></svg></button>
  <button class="tb"><svg class="ic"><use href="#i-mark"/></svg></button>
  <button class="tb"><svg class="ic"><use href="#i-marks"/></svg></button>
  <button class="tb"><svg class="ic"><use href="#i-clock"/></svg></button>
  <button class="tb"><svg class="ic"><use href="#refresh"/></svg></button>
  <span class="grip"></span>
  <button class="tb drop"><svg class="ic"><use href="#i-select"/></svg><i class="caret"></i></button>
  <button class="tb drop"><svg class="ic"><use href="#i-sellist"/></svg><i class="caret"></i></button>
  <button class="tb drop"><svg class="ic"><use href="#i-desel"/></svg><i class="caret"></i></button>
  <button class="tb"><svg class="ic"><use href="#i-selloc"/></svg></button>
  <span class="grip grip-s"></span>
  <button class="tb"><svg class="ic" viewBox="0 0 48 48"><ellipse cx="19" cy="18" rx="16" ry="17" fill="url(#blueFill)" stroke="#44709e" stroke-width="1.400"/><text x="19" y="29" text-anchor="middle" class="svg-i" fill="#fff">i</text><use href="#cursor" x="23" y="18" width="24" height="28"/></svg></button>
  <button class="tb"><svg class="ic"><use href="#i-abacus"/></svg></button>
  <button class="tb on"><svg class="ic gear-blue"><use href="#gear"/></svg></button>
  <button class="tb"><svg class="ic" viewBox="0 0 48 48"><text x="24" y="42" text-anchor="middle" class="svg-sigma" fill="#a20f9b">Σ</text></svg></button>
  <button class="tb drop"><svg class="ic"><use href="#i-table"/></svg><i class="caret"></i></button>
  <button class="tb drop"><svg class="ic"><use href="#i-measure"/></svg><i class="caret"></i></button>
  <button class="tb drop"><svg class="ic"><use href="#i-annot"/></svg><i class="caret"></i></button>
  <button class="tb off"><svg class="ic gear-gray"><use href="#gear"/></svg></button>
</div>

<div class="toolbar tb-second">
  <span class="grip grip-first"></span>
  <button class="tb"><svg class="ic"><use href="#i-dsm"/></svg></button>
  <button class="tb"><svg class="ic"><use href="#i-gpkg"/></svg></button>
  <button class="tb"><svg class="ic"><use href="#i-vline"/></svg></button>
  <button class="tb"><svg class="ic"><use href="#i-feather"/></svg></button>
  <button class="tb"><svg class="ic"><use href="#i-chip"/></svg></button>
  <button class="tb"><svg class="ic"><use href="#i-mesh"/></svg></button>
  <button class="tb"><svg class="ic"><use href="#i-virt"/></svg></button>
  <span class="grip"></span>
  <button class="tb"><svg class="ic"><use href="#i-pencils"/></svg><i class="caret caret-over"></i></button>
  <button class="tb"><svg class="ic"><use href="#i-pencil"/></svg></button>
  <button class="tb off"><svg class="ic"><use href="#i-saveedits"/></svg></button>
  <button class="tb off"><svg class="ic"><use href="#i-ptnew"/></svg></button>
  <button class="tb drop off-icon"><svg class="ic"><use href="#i-tools"/></svg><i class="caret"></i></button>
  <button class="tb off"><svg class="ic"><use href="#i-edit"/></svg></button>
  <button class="tb off"><svg class="ic"><use href="#i-trash"/></svg></button>
  <button class="tb off"><svg class="ic"><use href="#i-scissors"/></svg></button>
  <button class="tb off"><svg class="ic"><use href="#i-copy"/></svg></button>
  <button class="tb off"><svg class="ic"><use href="#i-paste"/></svg></button>
  <button class="tb off"><svg class="ic"><use href="#i-undo"/></svg></button>
  <button class="tb off"><svg class="ic"><use href="#i-redo"/></svg></button>
  <span class="grip grip-xs"></span>
  <button class="tb"><svg class="ic" viewBox="0 0 48 48"><use href="#tag"/><text x="28" y="26" text-anchor="middle" class="tag-txt" fill="#333">abc</text></svg></button>
  <button class="tb"><svg class="ic"><use href="#i-diagram"/></svg></button>
  <span class="sep"></span>
  <button class="tb"><svg class="ic" viewBox="0 0 48 48"><path d="M1 19l9-10h31v21H10z" fill="url(#paleBlue)" stroke="#4f86d6" stroke-width="2.400"/><text x="21" y="26" text-anchor="middle" class="tag-txt" fill="#333">ab</text><use href="#redball" x="26" y="12" width="20" height="36"/></svg></button>
  <button class="tb"><svg class="ic" viewBox="0 0 48 48"><path d="M2 19l9-10h34v21H11z" fill="#ffe0e0" stroke="#e8000b" stroke-width="2.600"/><text x="28" y="26" text-anchor="middle" class="tag-txt" fill="#d8000a">abc</text></svg></button>
  <span class="sep"></span>
  <button class="tb off"><svg class="ic" viewBox="0 0 48 48"><use href="#tag"/><text x="23" y="26" text-anchor="middle" class="tag-txt" fill="#333">ab</text><use href="#redball" x="26" y="12" width="20" height="36"/></svg></button>
  <button class="tb off"><svg class="ic" viewBox="0 0 48 48"><use href="#tag"/><text x="28" y="26" text-anchor="middle" class="tag-txt" fill="#333">abc</text><use href="#eye" x="16" y="26" width="28" height="22"/></svg></button>
  <button class="tb off"><svg class="ic" viewBox="0 0 48 48"><use href="#tag"/><text x="28" y="26" text-anchor="middle" class="tag-txt" fill="#333">abc</text><use href="#i-abcmove"/></svg></button>
  <button class="tb off"><svg class="ic" viewBox="0 0 48 48"><use href="#tag"/><text x="28" y="26" text-anchor="middle" class="tag-txt" fill="#333">abc</text><use href="#i-abcrot"/></svg></button>
  <button class="tb off"><svg class="ic" viewBox="0 0 48 48"><use href="#tag"/><text x="28" y="26" text-anchor="middle" class="tag-txt" fill="#333">abc</text><use href="#i-abcedit"/></svg></button>
  <span class="grip"></span>
  <button class="tb"><svg class="ic"><use href="#i-locator"/></svg></button>
  <span class="grip"></span>
  <button class="tb"><svg class="ic"><use href="#i-py"/></svg></button>
  <span class="grip"></span>
  <button class="tb"><svg class="ic" viewBox="0 0 48 48"><use href="#i-help"/><text x="30" y="32" text-anchor="middle" class="svg-q" fill="#fff">?</text></svg></button>
  <span class="grip"></span>
</div>

<div class="main">
  <div class="left">
    <div class="left-panels">
      <section class="panel browser">
        <header class="dock-head">
          <span class="dock-title">Przeglądarka</span>
          <span class="dock-btns"><svg class="dock-ic"><use href="#d-float"/></svg><svg class="dock-ic"><use href="#d-close"/></svg></span>
        </header>
        <div class="dock-tools">
          <span class="pt"><svg class="pic"><use href="#p-add"/></svg></span>
          <span class="pt"><svg class="pic"><use href="#refresh"/></svg></span>
          <span class="pt"><svg class="pic"><use href="#funnel"/></svg></span>
          <span class="pt"><svg class="pic"><use href="#p-collapse"/></svg></span>
          <span class="pt"><svg class="pic" viewBox="0 0 32 36"><use href="#p-info"/><text x="15" y="27" text-anchor="middle" class="svg-i2" fill="#fff">i</text></svg></span>
        </div>
        <div class="frame">
          <ul class="tree">
            <li class="row l2"><i class="tw"></i><svg class="ti"><use href="#db"/></svg><span>zad1</span></li>
            <li class="row l2"><i class="tw"></i><svg class="ti"><use href="#db"/></svg><span>zad2</span></li>
            <li class="row l2"><i class="tw"></i><svg class="ti"><use href="#db"/></svg><span>zad3</span></li>
            <li class="row l2"><i class="tw open"></i><svg class="ti"><use href="#db"/></svg><span>zad4</span></li>
            <li class="row l3"><i class="tw"></i><svg class="ti"><use href="#points"/></svg><span>airports</span></li>
            <li class="row l3 sel"><i class="tw"></i><svg class="ti"><use href="#line"/></svg><span>majrivers</span></li>
            <li class="row l3"><i class="tw"></i><svg class="ti"><use href="#points"/></svg><span>popp</span></li>
            <li class="row l3"><i class="tw"></i><svg class="ti"><use href="#line"/></svg><span>railroads</span></li>
            <li class="row l3"><i class="tw open"></i><svg class="ti"><use href="#poly"/></svg><span>regions</span></li>
            <li class="row l4"><i class="tw"></i><svg class="ti"><use href="#t-table"/></svg><span>Pola</span></li>
            <li class="row l3"><i class="tw"></i><svg class="ti"><use href="#line"/></svg><span>rivers</span></li>
            <li class="row l3"><i class="tw"></i><svg class="ti"><use href="#poly"/></svg><span>trees</span></li>
            <li class="row"><i class="tw none"></i><svg class="ti"><use href="#t-hana"/></svg><span>SAP HANA</span></li>
            <li class="row"><i class="tw"></i><svg class="ti"><use href="#t-mssql"/></svg><span>MS SQL Server</span></li>
            <li class="row"><i class="tw"></i><svg class="ti"><use href="#t-oracle"/></svg><span>Oracle</span></li>
            <li class="row"><i class="tw none"></i><svg class="ti"><use href="#globe"/></svg><span>WMS/WMTS</span></li>
            <li class="row"><i class="tw none"></i><svg class="ti"><use href="#t-grid"/></svg><span>Vector Tiles</span></li>
            <li class="row"><i class="tw"></i><svg class="ti"><use href="#t-xyz"/></svg><span>XYZ Tiles</span></li>
          </ul>
          <div class="vbar">
            <span class="vbtn"><i class="up"></i></span>
            <span class="thumb thumb-a"></span>
            <span class="track"></span>
            <span class="thumb thumb-b"></span>
            <span class="vbtn"><i class="down"></i></span>
          </div>
        </div>
      </section>

      <div class="hsplit"></div>

      <section class="panel layers">
        <header class="dock-head">
          <span class="dock-title">Warstwy</span>
          <span class="dock-btns"><svg class="dock-ic"><use href="#d-float"/></svg><svg class="dock-ic"><use href="#d-close"/></svg></span>
        </header>
        <div class="dock-tools">
          <span class="pt"><svg class="pic"><use href="#p-brush"/></svg></span>
          <span class="pt"><svg class="pic"><use href="#p-group"/></svg></span>
          <span class="pt"><svg class="pic"><use href="#p-eye"/></svg><i class="caret caret-mini"></i></span>
          <span class="pt"><svg class="pic"><use href="#p-funnel"/></svg><i class="caret caret-mini"></i></span>
          <span class="pt pt-drop"><svg class="pic" viewBox="0 0 32 36"><text x="9" y="24" text-anchor="middle" class="svg-eps" fill="#6b3a8a">ε</text><path d="M14 21h15l-4 6v9h-7v-9z" fill="#d8d8d8" stroke="#999"/></svg><i class="caret"></i></span>
          <span class="pt"><svg class="pic"><use href="#p-expand"/></svg></span>
          <span class="pt"><svg class="pic"><use href="#p-collapse"/></svg></span>
          <span class="pt"><svg class="pic"><use href="#p-remove"/></svg></span>
        </div>
        <div class="frame frame-layers">
          <ul class="legend">
            <li class="lrow off-layer"><i class="tw none"></i><span class="cb"></span><span class="sw sw-brown"></span><span class="lname">Evergreen</span></li>
            <li class="lrow off-layer"><i class="tw open"></i><span class="cb"></span><svg class="lic"><use href="#poly"/></svg><span class="lname">trees</span><span class="ind"><svg><use href="#t-funnel"/></svg></span></li>
            <li class="lsub"><span class="cb"><svg><use href="#c-check"/></svg></span><span class="swl sw-a"></span><span>Deciduous</span></li>
            <li class="lsub"><span class="cb"><svg><use href="#c-check"/></svg></span><span class="swl sw-b"></span><span>Evergreen</span></li>
            <li class="lsub"><span class="cb"><svg><use href="#c-check"/></svg></span><span class="swl sw-c"></span><span>Mixed Trees</span></li>
            <li class="lsub"><span class="cb"></span><span class="swl sw-d"></span></li>
            <li class="lrow off-layer"><i class="tw none"></i><span class="cb"></span><span class="sw sw-pink"></span><span class="lname">BristolBay</span></li>
            <li class="lrow off-layer"><i class="tw none"></i><span class="cb"></span><span class="sw sw-pink"></span><span class="lname">bufor100kmRzeki</span></li>
            <li class="lrow on-layer cur"><i class="tw none"></i><span class="cb"><svg><use href="#c-check"/></svg></span><span class="pnt"><b class="dot dot-green"></b></span><span class="lname">WezlyRailRoads</span></li>
            <li class="lrow on-layer"><i class="tw none"></i><span class="cb"><svg><use href="#c-check"/></svg></span><span class="pnt"><b class="dot dot-brown"></b></span><span class="lname">PrzecieciaRzekZLiniamiKolejowymi</span></li>
            <li class="lrow off-layer"><i class="tw none"></i><span class="cb"></span><span class="pnt"><b class="ln ln-a"></b></span><span class="lname tight">majrivers</span></li>
            <li class="lrow off-layer"><i class="tw none"></i><span class="cb"></span><span class="pnt"><b class="dot dot-red"></b></span><span class="lname">BudunkiBristolBayOdl100KmOdRzek</span></li>
            <li class="lrow off-layer"><i class="tw none"></i><span class="cb"></span><span class="pnt"><b class="ln ln-b"></b></span><span class="lname tight">rivers</span></li>
            <li class="lrow off-layer"><i class="tw none"></i><span class="cb"></span><span class="pnt"><b class="dot dot-brown"></b></span><span class="lname">BuildingsWBristolBay</span></li>
            <li class="lrow off-layer"><i class="tw none"></i><span class="cb"></span><span class="pnt"><b class="dot dot-red"></b></span><span class="lname">Buildings</span></li>
          </ul>
          <div class="vbar">
            <span class="vbtn"><i class="up"></i></span>
            <span class="thumb thumb-c"></span>
            <span class="track"></span>
            <span class="thumb thumb-d"></span>
          </div>
        </div>
      </section>
    </div>
    <div class="vsplit"></div>
  </div>

  <div class="map">
    <svg id="mapCanvas" class="map-canvas" viewBox="749 143 1568 1539"></svg>
  </div>

  <div class="right">
    <div class="vsplit vsplit-r"></div>
    <section class="panel algos">
      <header class="dock-head"><span class="dock-title">Algorytmy</span></header>
      <div class="dock-tools algo-tools">
        <span class="pt"><svg class="pic"><use href="#r-proc"/></svg><i class="caret caret-mini"></i></span>
        <span class="pt"><svg class="pic"><use href="#python"/></svg><i class="caret caret-mini"></i></span>
      </div>
      <div class="search">
        <svg class="search-ic" viewBox="0 0 26 26"><circle cx="10.500" cy="10.500" r="8.500" fill="none" stroke="#999" stroke-width="2"/><path d="M17 17l7 7" stroke="#999" stroke-width="2.400"/></svg>
        <span>wyc</span>
      </div>
      <ul class="algo-tree">
        <li class="arow"><i class="tw"></i><svg class="aic"><use href="#r-clock"/></svg><span>Ostatnio</span></li>
        <li class="arow"><i class="tw open"></i><svg class="aic"><use href="#r-qgis"/></svg><span>Wektor</span></li>
        <li class="arow asel"><svg class="node" viewBox="0 0 30 30"><path d="M5 6l8 14 6-14" fill="none" stroke="#666" stroke-dasharray="2 2"/><circle cx="5" cy="6" r="3.500" fill="#85bd85" stroke="#556" stroke-width="1.400"/><circle cx="13" cy="21" r="3.500" fill="#85bd85" stroke="#556" stroke-width="1.400"/><circle cx="18" cy="6" r="3.500" fill="#85bd85" stroke="#556" stroke-width="1.400"/></svg></li>
      </ul>
    </section>
  </div>
</div>

<script src="map.js"></script>
</body>
</html>
```

FILE: styles.css
```css
* {
  box-sizing: border-box;
}
html, body {
  margin: 0;
  height: 100%;
  overflow: hidden;
}
body {
  width: 2436px;
  height: 1682px;
  background: #ececec;
  font-family: Inter, "Liberation Sans", sans-serif;
  font-size: 25.400px;
  color: #222;
  display: flex;
  flex-direction: column;
}
ul {
  list-style: none;
  margin: 0;
  padding: 0;
}
i, b {
  font-style: normal;
}
.defs {
  position: absolute;
  width: 0;
  height: 0;
}

/* svg text inside the icons */
.tag-txt {
  font: bold 17px "Liberation Sans", sans-serif;
}
.svg-a {
  font: 27px "Liberation Sans", sans-serif;
}
.svg-s {
  font: bold 15px "Liberation Sans", sans-serif;
}
.svg-i {
  font: italic bold 29px "Liberation Serif", serif;
}
.svg-i2 {
  font: italic bold 24px "Liberation Serif", serif;
}
.svg-q {
  font: bold 30px "Liberation Sans", sans-serif;
}
.svg-sigma {
  font: bold 50px "DejaVu Serif", serif;
}
.svg-eps {
  font: 30px "DejaVu Serif", serif;
}

/* toolbars */
.toolbar {
  display: flex;
  flex: none;
  overflow: hidden;
  border-bottom: 2px solid #b9b9b9;
}
.tb-top {
  height: 63px;
  align-items: flex-start;
  background: linear-gradient(#ececec, #f5f5f5 50%, #eeeeee);
}
.tb-second {
  height: 78px;
  padding-top: 15px;
  align-items: flex-start;
  background: linear-gradient(#f8f8f8, #ebebeb);
}
.tb {
  position: relative;
  flex: none;
  display: flex;
  align-items: center;
  width: 66px;
  height: 48px;
  padding: 0 0 0 9px;
  margin: 0;
  border: 0;
  background: none;
}
.tb.drop {
  width: 90px;
}
.tb.on::before {
  content: "";
  position: absolute;
  top: -8px;
  bottom: -7px;
  left: 1px;
  right: 2px;
  background: #d5d5d5;
  border: 2px solid #bbb;
  border-radius: 6px;
}
.tb.off {
  filter: grayscale(.6) opacity(.32);
}
.off-icon .ic {
  filter: grayscale(.6) opacity(.32);
}
.ic {
  position: relative;
  flex: none;
  width: 48px;
  height: 48px;
}
.gear-blue {
  color: #4a7fc4;
}
.gear-gray {
  color: #777;
}
.caret {
  flex: none;
  width: 0;
  height: 0;
  margin-left: 11px;
  border-left: 7px solid transparent;
  border-right: 7px solid transparent;
  border-top: 9px solid #555;
}
.caret-over {
  position: absolute;
  left: 45px;
  bottom: 0;
  margin: 0;
  border-width: 7px 6px 0;
}
.grip {
  flex: none;
  width: 33px;
  height: 48px;
  padding-left: 15px;
  display: flex;
  align-items: center;
}
.grip::before {
  content: "";
  width: 10px;
  height: 38px;
  background: radial-gradient(circle, #c6c6c6 1.400px, transparent 1.800px) 0 0 / 5px 7.600px;
}
.grip-first {
  width: 19px;
  padding-left: 3px;
}
.grip-s {
  width: 29px;
  padding-left: 12px;
}
.grip-xs {
  width: 27px;
  padding-left: 14px;
}
.sep {
  flex: none;
  width: 15px;
  height: 38px;
  margin-top: 5px;
  padding-left: 7px;
}
.sep::before {
  content: "";
  display: block;
  width: 2px;
  height: 100%;
  background: #d5d5d5;
}

/* main area */
.main {
  flex: 1;
  display: flex;
  min-height: 0;
}
.left {
  flex: none;
  width: 748px;
  display: flex;
}
.left-panels {
  width: 734px;
  display: flex;
  flex-direction: column;
}
.vsplit {
  flex: none;
  width: 14px;
}
.vsplit::before {
  content: "";
  display: block;
  width: 4px;
  height: 36px;
  margin: 777px 0 0 7px;
  background: radial-gradient(circle, #c6c6c6 1.200px, transparent 1.500px) 0 0 / 4px 6px;
}
.panel {
  display: flex;
  flex-direction: column;
  min-height: 0;
}
.browser {
  flex: none;
  height: 755px;
}
.layers {
  flex: 1;
}
.hsplit {
  flex: none;
  height: 16px;
  display: flex;
  justify-content: center;
  padding-top: 5px;
}
.hsplit::before {
  content: "";
  width: 36px;
  height: 4px;
  background: radial-gradient(circle, #c6c6c6 1.200px, transparent 1.500px) 0 0 / 6px 4px;
}
.dock-head {
  flex: none;
  height: 39px;
  padding: 0 2px;
  display: flex;
  align-items: center;
  justify-content: space-between;
}
.layers .dock-head {
  height: 34px;
}
.dock-title {
  font-size: 22.400px;
  white-space: nowrap;
}
.dock-btns {
  display: flex;
  gap: 7px;
}
.dock-ic {
  width: 21px;
  height: 21px;
}
.dock-tools {
  flex: none;
  height: 63px;
  padding-bottom: 3px;
  display: flex;
  align-items: center;
}
.layers .dock-tools {
  height: 64px;
  padding-bottom: 0;
}
.pt {
  position: relative;
  flex: none;
  width: 50px;
  height: 36px;
  display: flex;
  justify-content: center;
  align-items: center;
}
.pt-drop {
  width: 76px;
  justify-content: flex-start;
  padding-left: 9px;
}
.pt-drop .caret {
  margin-left: 13px;
  border-width: 9px 8px 0;
}
.pic {
  width: 32px;
  height: 36px;
}
.caret-mini {
  position: absolute;
  right: 3px;
  bottom: 0;
  margin: 0;
  border-width: 7px 6px 0;
}

/* frames and scroll bars */
.frame {
  flex: 1;
  min-height: 0;
  display: flex;
  overflow: hidden;
  background: #fff;
  border: solid #b5b5b5;
  border-width: 1px 1px 1px 0;
}
.frame-layers {
  border-bottom: 0;
}
.tree, .legend {
  flex: 1;
  min-width: 0;
}
.legend {
  margin-top: -5px;
}
.vbar {
  flex: none;
  width: 27px;
  display: flex;
  flex-direction: column;
  border-left: 1px solid #ddd;
  background: linear-gradient(90deg, #fff, #f0f0f0);
}
.vbtn {
  flex: none;
  height: 27px;
  display: flex;
  align-items: center;
  justify-content: center;
  background: #fff;
}
.vbtn i {
  width: 0;
  height: 0;
  border-left: 8px solid transparent;
  border-right: 8px solid transparent;
}
.vbtn .up {
  border-bottom: 10px solid #666;
}
.vbtn .down {
  border-top: 10px solid #666;
}
.thumb {
  flex: none;
  background: #e2e2e2;
  border-top: 2px solid #cfcfcf;
  border-bottom: 2px solid #cfcfcf;
}
.thumb-a {
  height: 222px;
}
.thumb-b {
  height: 68px;
}
.thumb-c {
  height: 148px;
}
.thumb-d {
  height: 14px;
}
.track {
  flex: 1;
}

/* browser tree */
.row {
  height: 36px;
  display: flex;
  align-items: center;
  white-space: nowrap;
}
.l2 {
  padding-left: 64px;
}
.l3 {
  padding-left: 96px;
}
.l4 {
  padding-left: 128px;
}
.sel {
  width: 398px;
  background: #dcdcdc;
  color: #000;
}
.tw {
  flex: none;
  width: 24px;
  height: 18px;
  position: relative;
}
.tw::before {
  content: "";
  position: absolute;
  left: 9px;
  top: 1px;
  border-top: 8px solid transparent;
  border-bottom: 8px solid transparent;
  border-left: 8px solid #555;
}
.tw.open::before {
  left: 5px;
  top: 5px;
  border-left: 8px solid transparent;
  border-right: 8px solid transparent;
  border-top: 9px solid #666;
  border-bottom: 0;
}
.tw.none::before {
  display: none;
}
.ti {
  flex: none;
  width: 32px;
  height: 32px;
  margin: 0 13px 0 10px;
}

/* layer tree */
.lrow {
  height: 36px;
  display: flex;
  align-items: center;
  white-space: nowrap;
  position: relative;
}
.lrow .tw {
  width: 32px;
}
.lrow .tw.open::before {
  left: 8px;
}
.lname {
  letter-spacing: .7px;
}
.off-layer .lname {
  font-weight: 700;
  font-style: italic;
  color: #808080;
}
.on-layer .lname {
  font-weight: 700;
  color: #1a1a1a;
}
.cur {
  background: #dcdcdc;
}
.cur .lname {
  color: #000;
  text-decoration: underline;
  text-decoration-thickness: 3px;
  text-underline-offset: 2px;
}
.cb {
  flex: none;
  width: 27px;
  height: 27px;
  margin-left: 11px;
  background: #fff;
  border: 2px solid #bcbcbc;
  border-radius: 2px;
  display: flex;
  align-items: center;
  justify-content: center;
}
.cb svg {
  width: 16px;
  height: 22px;
}
.sw {
  flex: none;
  width: 32px;
  height: 32px;
  margin: 0 14px 0 12px;
  border: 1px solid;
}
.sw-brown {
  background: #8f5430;
  border-color: #7a4526;
}
.sw-pink {
  background: #e8708c;
  border-color: #a84f68;
}
.lic {
  flex: none;
  width: 32px;
  height: 32px;
  margin: 0 14px 0 12px;
}
.pnt {
  flex: none;
  width: 32px;
  margin: 0 14px 0 12px;
  display: flex;
  align-items: center;
  justify-content: center;
}
.dot {
  width: 6px;
  height: 6px;
  border-radius: 50%;
}
.dot-green {
  background: #7da671;
}
.dot-brown {
  background: #8d5a36;
}
.dot-red {
  background: #ab3b3b;
}
.ln {
  width: 30px;
  height: 3px;
}
.ln-a {
  background: #e27d7d;
}
.ln-b {
  background: #ea5f80;
}
.tight {
  margin-left: -3px;
}
.ind {
  position: absolute;
  left: 665px;
  top: 2px;
  width: 33px;
  height: 33px;
  border: 1px solid #ddd;
  border-radius: 3px;
  display: flex;
  align-items: center;
  justify-content: center;
}
.ind svg {
  width: 24px;
  height: 30px;
}
.lsub {
  height: 72px;
  display: flex;
  align-items: center;
  padding-left: 71px;
}
.lsub .cb {
  width: 28px;
}
.swl {
  flex: none;
  width: 68px;
  height: 68px;
  margin: 0 13px 0 12px;
  border: 2px solid;
}
.sw-a {
  background: #88fc88;
  border-color: #68c468;
}
.sw-b {
  background: #b2e1a9;
  border-color: #7f9f7a;
}
.sw-c {
  background: #3fa85f;
  border-color: #2f8048;
}
.sw-d {
  background: #004218;
  border-color: #004218;
}

/* map */
.map {
  flex: 1;
  min-width: 0;
  margin-top: 1px;
  background: #fff;
  border: solid #b5b5b5;
  border-width: 1px 1px 0 1px;
}
.map-canvas {
  display: block;
  width: 100%;
  height: 100%;
  filter: blur(.5px);
}

/* processing panel */
.right {
  flex: none;
  width: 117px;
  display: flex;
  overflow: hidden;
}
.vsplit-r {
  margin-left: 1px;
}
.algos {
  flex: none;
  width: 300px;
}
.algos .dock-head {
  padding-left: 8px;
}
.algo-tools {
  padding-left: 5px;
}
.algo-tools .pic {
  width: 36px;
  height: 32px;
}
.search {
  flex: none;
  height: 46px;
  display: flex;
  align-items: center;
  gap: 17px;
  padding-left: 17px;
  background: #fff;
  border: 2px solid #c4c4c4;
  border-radius: 6px;
}
.search-ic {
  width: 26px;
  height: 26px;
}
.algo-tree {
  flex: 1;
  padding-top: 2px;
  background: #fff;
  border-left: 1px solid #b5b5b5;
}
.arow {
  height: 36px;
  display: flex;
  align-items: center;
  white-space: nowrap;
}
.arow .tw {
  width: 40px;
}
.arow .tw::before {
  left: 16px;
}
.arow .tw.open::before {
  left: 13px;
}
.aic {
  width: 30px;
  height: 30px;
  margin: 0 14px 0 7px;
}
.asel {
  background: #dcdcdc;
  padding-left: 84px;
}
.node {
  width: 30px;
  height: 30px;
}
```

FILE: map.js
```js
// points read off the canvas, grouped by the crop they were read from
const sets = [
  { ox: 1300, oy: 130, sx: 3, sy: 2.8, pts: [
    [813,69],[804,93],[790,119],[782,124],[776,130],[772,132],[736,177],[685,225],[678,232],[672,235],
    [656,267],[649,287],[628,310],[611,347],[597,370],[595,385],[596,398],[580,411],[572,425],[568,438],
    [570,460],[566,477],[558,507],[546,531],[542,558],[541,570],[541,580],[545,590],[562,598],[582,608],
    [600,625],[605,635],[589,660],[560,709],[566,715],[573,727],[568,740],[563,755],[550,765],[546,780],
    [529,797],[537,812],[543,827],[536,847],[506,878],[486,893],[455,907],[448,915],[444,922],[432,942],
    [426,950],[406,972],[372,987],[364,1005],[352,1036],[341,1042],[335,1050],[330,1055],[322,1085],[315,1098],
    [307,1117],[285,1136],[277,1165],[285,1200],[280,1203],[290,1233],[290,1245],[283,1260],[267,1288],[264,1312],
    [272,1348],[265,1377],[264,1408],[270,1440],[287,1470],[278,1468]
  ] },
  { ox: 1300, oy: 680, sx: 3, sy: 2.8, pts: [
    [289,22,1],[291,38],[296,68],[312,132],[326,165],[320,180],[311,211],[315,222],[333,245],[337,268],
    [333,292],[328,300],[328,310],[332,322],[337,345],[347,362],[358,380],[368,415],[373,432],[372,440],
    [364,464],[364,491],[358,593],[357,622],[356,632],[360,642],[371,668],[368,693],[372,733],[382,755],
    [390,772],[395,785],[410,816],[425,835],[443,848],[452,877],[458,885],[478,906],[497,910],[520,913],
    [547,936],[572,953],[592,950],[605,965],[613,983],[654,993],[701,989],[742,993],[752,997],[772,1002],
    [790,1000],[845,988],[850,992],[868,1003],[888,1007],[908,1010],[940,1013],[955,1025],[985,1027],[990,1026],
    [1010,1027],[1040,1025],[1052,1005],[1002,1052],[1002,1077],[1005,1102],[995,1125],[985,1140],[966,1152],[928,1160],
    [912,1158],[888,1187],[858,1198],[830,1218],[815,1230],[808,1254],[795,1283],[775,1307],[755,1325],[745,1345],
    [750,1365],[739,1385],[712,1425],[715,1405],[688,1420],[675,1430],[650,1447],[640,1458],[624,1493],[598,1509],[578,1519]
  ] },
  { ox: 1400, oy: 1220, sx: 3, sy: 3, pts: [
    [268,137],[258,125],[245,112],[235,98],[270,178],[272,202],[282,220],[316,253],[346,300],[367,323],
    [380,335],[400,343],[425,349],[445,352],[460,358],[470,372],[487,380],[504,379],[533,378],[545,373],
    [558,372],[578,388],[608,400],[628,419],[655,427],[665,437],[672,447],[683,456],[702,443],[718,438],
    [738,431],[772,428],[800,420],[812,411],[835,432],[855,450],[880,455],[888,465],[905,487],[925,503],
    [935,530],[932,522],[970,552],[977,565],[980,578],[978,590],[985,605],[1000,598],[982,632],[976,660],
    [966,695],[953,722],[948,745],[940,760],[932,775],[952,815],[955,840],[945,850],[938,860],[935,875],
    [935,895],[942,912],[925,935],[917,945],[903,977],[880,1007],[803,1027],[770,1043],[755,1050],[745,1055],
    [737,1068],[716,1148],[724,1135],[718,1190],[714,1210],[720,1230],[725,1255],[733,1270],[747,1320],[748,1350],
    [757,1372],
    [1030,625],[1055,638],[1075,640],[1085,640],[1095,640],[1112,640],[1140,652],[1155,655],[1175,642]
  ] }
];

const canvas = document.getElementById('mapCanvas');
const NS = 'http://www.w3.org/2000/svg';

sets.forEach(set => {
  set.pts.forEach(p => {
    const c = document.createElementNS(NS, 'circle');
    c.setAttribute('cx', set.ox + p[0] / set.sx);
    c.setAttribute('cy', set.oy + p[1] / set.sy);
    c.setAttribute('r', 6);
    c.setAttribute('fill', p[2] ? '#8a4b2a' : '#77b56b');
    c.setAttribute('stroke', '#3c5a3c');
    c.setAttribute('stroke-width', 1.8);
    canvas.appendChild(c);
  });
});
```
